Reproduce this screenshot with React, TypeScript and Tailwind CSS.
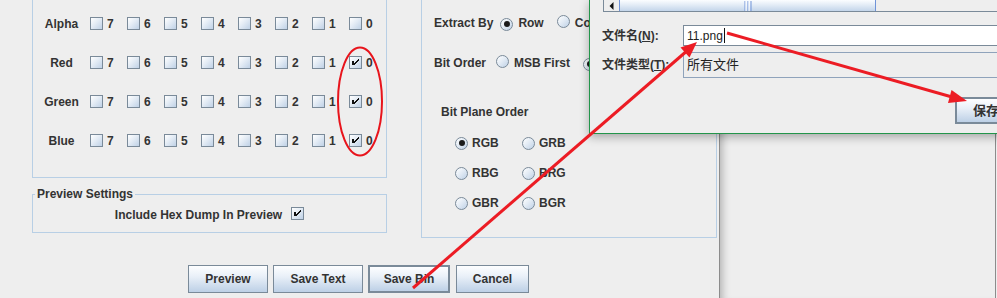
import React from "react";

const Chk = ({ checked = false }: { checked?: boolean }) => (
  <span className="relative inline-block w-[13px] h-[13px] shrink-0 border border-[#7a8a99] bg-[linear-gradient(135deg,#ffffff_0%,#e4ecf5_45%,#bfd1e6_100%)]">
    {checked && (
      <svg className="absolute left-[-1px] top-[-1px]" width="13" height="13" viewBox="0 0 13 13" shapeRendering="crispEdges">
        <rect x="3" y="5" width="2" height="4" fill="#111" />
        <path d="M9 3 H10 V4 H9 Z M8 4 H10 V5 H8 Z M7 5 H9 V6 H7 Z M6 6 H8 V7 H6 Z M5 7 H7 V8 H5 Z M5 8 H6 V9 H5 Z" fill="#111" />
      </svg>
    )}
  </span>
);

const Radio = ({ on = false }: { on?: boolean }) => (
  <span className="inline-flex items-center justify-center w-[13px] h-[13px] shrink-0 rounded-full border border-[#7a8a99] bg-[linear-gradient(135deg,#ffffff_0%,#e4ecf5_45%,#bfd1e6_100%)]">
    {on && <span className="w-[6px] h-[6px] rounded-full bg-[#1b1b1b]" />}
  </span>
);

const BitRow = ({ label, checked0 = false }: { label: string; checked0?: boolean }) => (
  <div className="flex items-center h-[39px]">
    <div className="w-[57px] text-center">{label}</div>
    {[7, 6, 5, 4, 3, 2, 1, 0].map((b) => (
      <div key={b} className="flex items-center w-[37px]">
        <Chk checked={b === 0 && checked0} />
        <span className="ml-[4px]">{b}</span>
      </div>
    ))}
  </div>
);

const btn =
  "h-[28px] border border-[#7a8a99] bg-[linear-gradient(to_bottom,#fdfeff_0%,#e9f0f8_40%,#bdd0e6_100%)] flex items-center justify-center";

export default function App() {
  return (
    <div className="relative w-[997px] h-[298px] overflow-hidden bg-[#eeeeee] text-[#333333] text-[12px] leading-[16px] font-bold font-['Liberation_Sans','Noto_Sans_CJK_SC',sans-serif]">
      <div className="flex h-full">
        {/* main window */}
        <div className="w-[720px] h-full shrink-0 border-r border-[#8c8c8c]">
          <div className="flex">
            <div className="ml-[32px] w-[355px] flex flex-col">
              <div className="h-[178px] border border-t-0 border-[#b8cfe5] pt-[4px]">
                <BitRow label="Alpha" />
                <BitRow label="Red" checked0 />
                <BitRow label="Green" checked0 />
                <BitRow label="Blue" checked0 />
              </div>
              <fieldset className="mt-[9px] border border-[#b8cfe5] px-0 pb-[9px] min-w-0">
                <legend className="ml-[2px] px-[2px] leading-[14px]">Preview Settings</legend>
                <div className="pt-[6px] flex items-center justify-center h-[22px]">
                  <span>Include Hex Dump In Preview</span>
                  <span className="ml-[9px]">
                    <Chk checked />
                  </span>
                </div>
              </fieldset>
            </div>
            <div className="ml-[34px] w-[296px] h-[238px] border border-t-0 border-[#b8cfe5] pl-[12px] pt-[15px]">
              <div className="flex items-center h-[16px]">
                <span>Extract By</span>
                <span className="ml-[7px]"><Radio on /></span>
                <span className="ml-[5px]">Row</span>
                <span className="ml-[13px]"><Radio /></span>
                <span className="ml-[5px]">Column</span>
              </div>
              <div className="flex items-center h-[16px] mt-[24px]">
                <span>Bit Order</span>
                <span className="ml-[10px]"><Radio /></span>
                <span className="ml-[5px]">MSB First</span>
                <span className="ml-[13px]"><Radio on /></span>
                <span className="ml-[5px]">LSB First</span>
              </div>
              <div className="h-[16px] mt-[33px] ml-[7px] flex items-center">Bit Plane Order</div>
              <div className="mt-[15px] ml-[21px] flex flex-col gap-[14px]">
                {[
                  ["RGB", "GRB"],
                  ["RBG", "BRG"],
                  ["GBR", "BGR"],
                ].map((r, i) => (
                  <div key={i} className="flex h-[16px] items-center">
                    {r.map((t, j) => (
                      <div key={t} className="w-[67px] flex items-center">
                        <Radio on={i === 0 && j === 0} />
                        <span className="ml-[4px]">{t}</span>
                      </div>
                    ))}
                  </div>
                ))}
              </div>
            </div>
          </div>
          <div className="flex mt-[27px] ml-[188px]">
            <div className={`${btn} w-[80px]`}>Preview</div>
            <div className={`${btn} w-[90px] ml-[5px]`}>Save Text</div>
            <div className={`${btn} w-[82px] ml-[5px] border-2`}>Save Bin</div>
            <div className={`${btn} w-[73px] ml-[6px]`}>Cancel</div>
          </div>
        </div>
        {/* window behind */}
        <div className="w-[276px] h-full shrink-0 border-r border-[#8c8c8c] shadow-[inset_9px_0_9px_-7px_rgba(0,0,0,0.28)]" />
      </div>

      {/* save file dialog */}
      <div className="absolute left-[589px] top-0 w-[420px] h-[134px] border-l border-b border-[#23954a] bg-[#eeeeee] shadow-[0_3px_9px_rgba(0,0,0,0.3)]">
        <div className="ml-[13px] flex h-[12px] border-l border-b border-[#7a8a99]">
          <div className="w-[15px] h-full flex items-center justify-center">
            <svg width="5" height="8" viewBox="0 0 5 8">
              <path d="M4.5 0 L0.5 4 L4.5 8 Z" fill="#111" />
            </svg>
          </div>
          <div className="relative w-[257px] h-full border-x border-[#6f93d8] bg-[linear-gradient(to_bottom,#fbfdff_0%,#e3ecf6_45%,#c3d5ea_100%)] flex items-center justify-center">
            <svg width="8" height="10" viewBox="0 0 8 10">
              <path d="M1 0 V10 M4 0 V10 M7 0 V10" stroke="#6f93d8" strokeWidth="1" />
              <path d="M2 0 V10 M5 0 V10" stroke="#ffffff" strokeWidth="1" />
            </svg>
          </div>
          <div className="flex-1" />
        </div>
        <div className="ml-[12px] mt-[13px] flex items-center h-[21px]">
          <span className="w-[81px] shrink-0 whitespace-nowrap">
            文件名(<span className="underline">N</span>):
          </span>
          <div className="flex-1 h-full border border-[#7a8a99] bg-white font-normal text-[#222] pl-[3px] flex items-center">
            11.png
            <span className="ml-[1px] w-[1px] h-[15px] bg-[#111]" />
          </div>
        </div>
        <div className="ml-[12px] mt-[6px] flex items-center h-[26px]">
          <span className="w-[81px] shrink-0 whitespace-nowrap">
            文件类型(<span className="underline">T</span>):
          </span>
          <div className="flex-1 h-full border border-[#8fa3bb] bg-[#eeeeee] font-normal text-[#222] pl-[3px] flex items-center text-[13px]">
            所有文件
          </div>
        </div>
        <div className="ml-[365px] mt-[19px] h-[27px] w-[60px] border-2 border-[#7a8a99] bg-[linear-gradient(to_bottom,#fdfeff_0%,#e9f0f8_40%,#bdd0e6_100%)] flex items-center pl-[16px] text-[13px]">
          保存
        </div>
      </div>

      {/* annotations */}
      <svg className="absolute left-0 top-0 pointer-events-none" width="997" height="298" viewBox="0 0 997 298">
        <ellipse cx="360" cy="101.5" rx="22" ry="54" fill="none" stroke="#e8141c" strokeWidth="2" />
        <line x1="413" y1="288" x2="688" y2="50" stroke="#ec1c24" strokeWidth="3" />
        <polygon points="697,42 689.5,57.5 680.5,47.5" fill="#ec1c24" />
        <line x1="727" y1="33" x2="952" y2="97" stroke="#ec1c24" strokeWidth="3" />
        <polygon points="967,101 951.5,90 948,103" fill="#ec1c24" />
      </svg>
    </div>
  );
}
